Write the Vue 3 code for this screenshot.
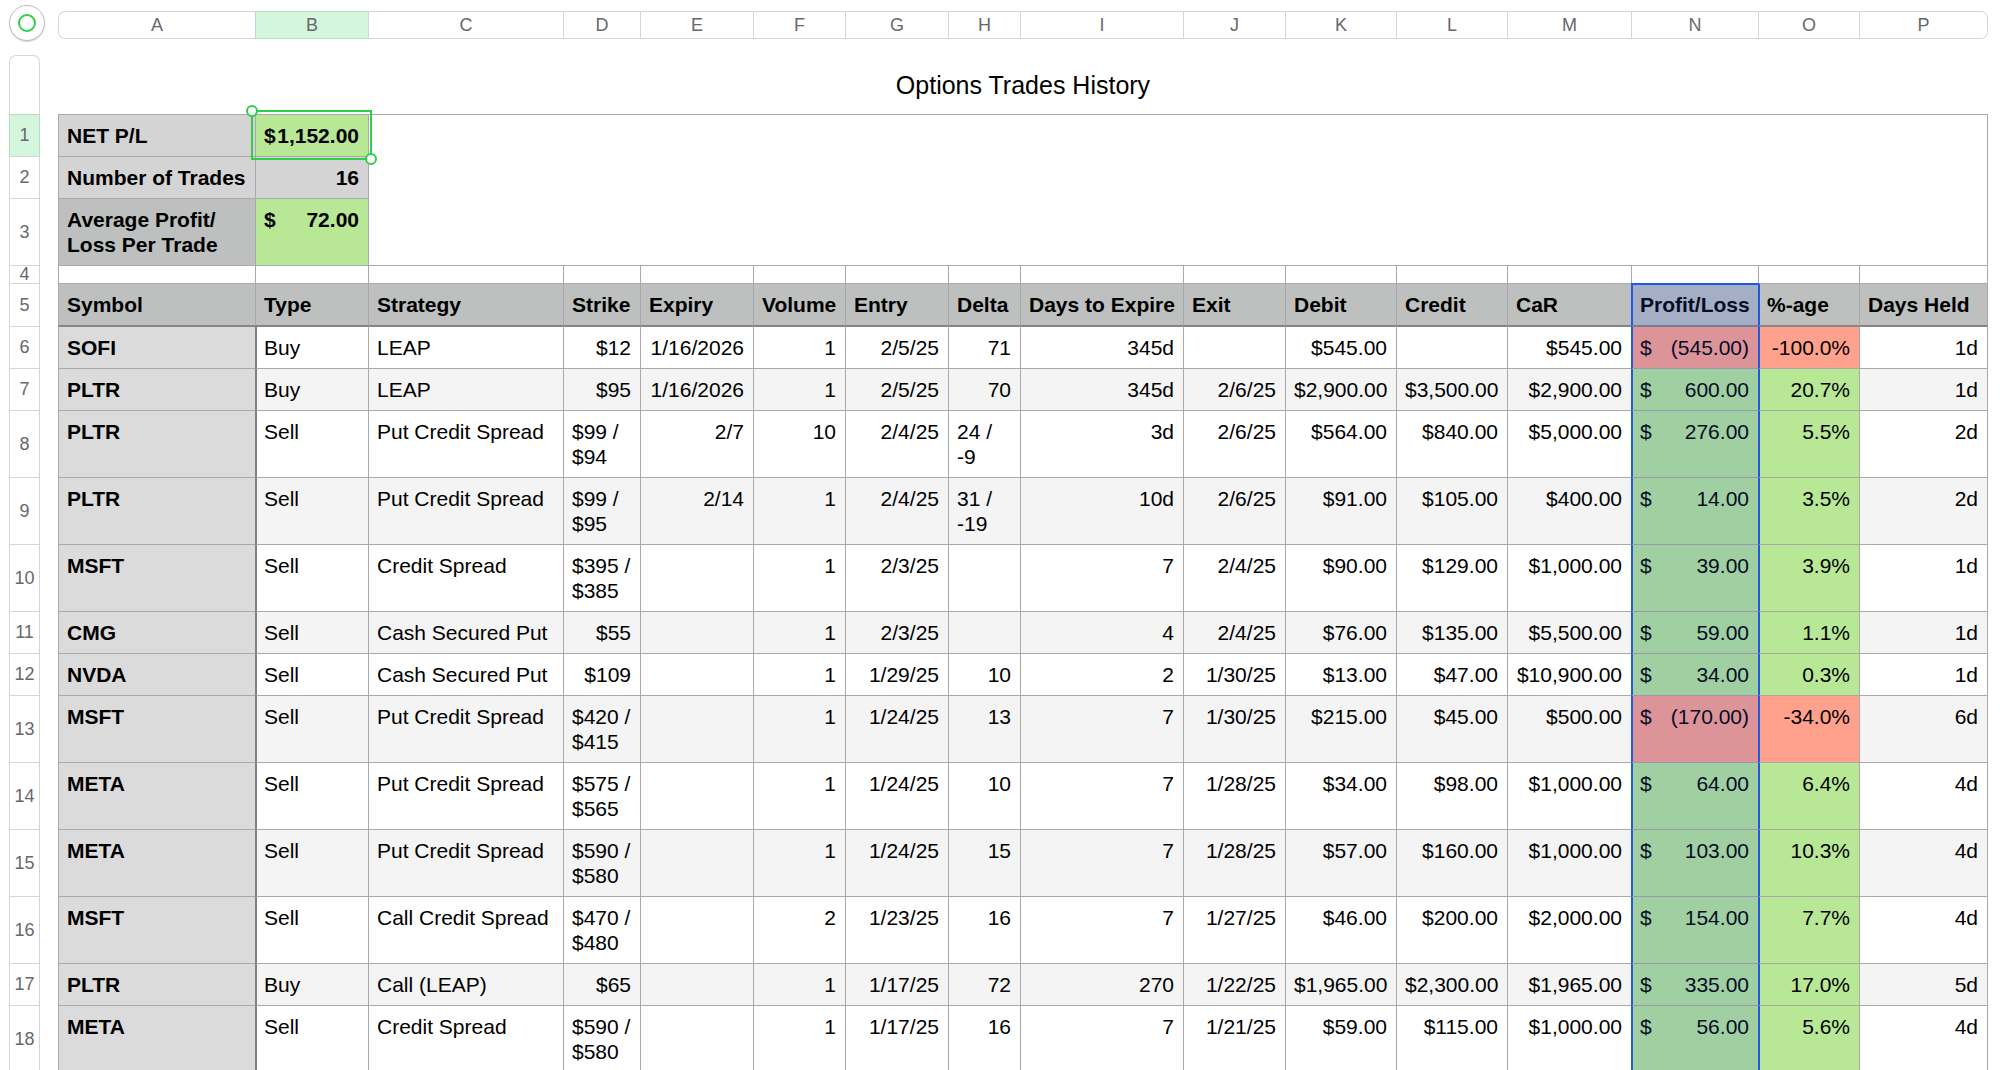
<script setup>
const columns = [
  { letter: 'A', width: 197 },
  { letter: 'B', width: 113 },
  { letter: 'C', width: 195 },
  { letter: 'D', width: 77 },
  { letter: 'E', width: 113 },
  { letter: 'F', width: 92 },
  { letter: 'G', width: 103 },
  { letter: 'H', width: 72 },
  { letter: 'I', width: 163 },
  { letter: 'J', width: 102 },
  { letter: 'K', width: 111 },
  { letter: 'L', width: 111 },
  { letter: 'M', width: 124 },
  { letter: 'N', width: 127 },
  { letter: 'O', width: 101 },
  { letter: 'P', width: 129 }
]

const headings = [
  'Symbol', 'Type', 'Strategy', 'Strike', 'Expiry', 'Volume', 'Entry', 'Delta',
  'Days to Expire', 'Exit', 'Debit', 'Credit', 'CaR', 'Profit/Loss', '%-age', 'Days Held'
]

const trades = [
  ['SOFI', 'Buy', 'LEAP', '$12', '1/16/2026', '1', '2/5/25', '71', '345d', '', '$545.00', '', '$545.00', '(545.00)', '-100.0%', '1d'],
  ['PLTR', 'Buy', 'LEAP', '$95', '1/16/2026', '1', '2/5/25', '70', '345d', '2/6/25', '$2,900.00', '$3,500.00', '$2,900.00', '600.00', '20.7%', '1d'],
  ['PLTR', 'Sell', 'Put Credit Spread', '$99 /\n$94', '2/7', '10', '2/4/25', '24 /\n-9', '3d', '2/6/25', '$564.00', '$840.00', '$5,000.00', '276.00', '5.5%', '2d'],
  ['PLTR', 'Sell', 'Put Credit Spread', '$99 /\n$95', '2/14', '1', '2/4/25', '31 /\n-19', '10d', '2/6/25', '$91.00', '$105.00', '$400.00', '14.00', '3.5%', '2d'],
  ['MSFT', 'Sell', 'Credit Spread', '$395 /\n$385', '', '1', '2/3/25', '', '7', '2/4/25', '$90.00', '$129.00', '$1,000.00', '39.00', '3.9%', '1d'],
  ['CMG', 'Sell', 'Cash Secured Put', '$55', '', '1', '2/3/25', '', '4', '2/4/25', '$76.00', '$135.00', '$5,500.00', '59.00', '1.1%', '1d'],
  ['NVDA', 'Sell', 'Cash Secured Put', '$109', '', '1', '1/29/25', '10', '2', '1/30/25', '$13.00', '$47.00', '$10,900.00', '34.00', '0.3%', '1d'],
  ['MSFT', 'Sell', 'Put Credit Spread', '$420 /\n$415', '', '1', '1/24/25', '13', '7', '1/30/25', '$215.00', '$45.00', '$500.00', '(170.00)', '-34.0%', '6d'],
  ['META', 'Sell', 'Put Credit Spread', '$575 /\n$565', '', '1', '1/24/25', '10', '7', '1/28/25', '$34.00', '$98.00', '$1,000.00', '64.00', '6.4%', '4d'],
  ['META', 'Sell', 'Put Credit Spread', '$590 /\n$580', '', '1', '1/24/25', '15', '7', '1/28/25', '$57.00', '$160.00', '$1,000.00', '103.00', '10.3%', '4d'],
  ['MSFT', 'Sell', 'Call Credit Spread', '$470 /\n$480', '', '2', '1/23/25', '16', '7', '1/27/25', '$46.00', '$200.00', '$2,000.00', '154.00', '7.7%', '4d'],
  ['PLTR', 'Buy', 'Call (LEAP)', '$65', '', '1', '1/17/25', '72', '270', '1/22/25', '$1,965.00', '$2,300.00', '$1,965.00', '335.00', '17.0%', '5d'],
  ['META', 'Sell', 'Credit Spread', '$590 /\n$580', '', '1', '1/17/25', '16', '7', '1/21/25', '$59.00', '$115.00', '$1,000.00', '56.00', '5.6%', '4d']
]

const PROFIT = 13
const PERCENT = 14

function cellClass(trade, index) {
  const loss = trade[PERCENT].startsWith('-')
  return {
    number: index > 2 && !trade[index].includes('\n'),
    first: index === 1,
    profit: index === PROFIT,
    percent: index === PERCENT,
    gain: index >= PROFIT && index <= PERCENT && !loss,
    loss: index >= PROFIT && index <= PERCENT && loss
  }
}
</script>

<template>
  <main class="sheet">
    <table class="grid">
      <colgroup>
        <col class="rail-col" />
        <col class="gap-col" />
        <col v-for="c in columns" :key="c.letter" :style="{ width: c.width + 'px' }" />
      </colgroup>
      <thead>
        <tr class="letters">
          <td class="corner">
            <button class="handle" type="button" aria-label="Select table">
              <svg viewBox="0 0 36 36" width="36" height="36" aria-hidden="true">
                <circle cx="18" cy="18" r="8" fill="none" stroke="#2fd049" stroke-width="2" />
              </svg>
            </button>
          </td>
          <td></td>
          <th v-for="c in columns" :key="c.letter" scope="col" :class="{ active: c.letter === 'B' }">{{ c.letter }}</th>
        </tr>
        <tr class="spacer"><td colspan="18"></td></tr>
        <tr class="title-row">
          <td class="rail rail-top"></td>
          <td></td>
          <td colspan="16"><h1 class="title">Options Trades History</h1></td>
        </tr>
      </thead>
      <tbody>
        <tr>
          <th class="rail active" scope="row">1</th>
          <td></td>
          <th class="cell summary" scope="row">NET P/L</th>
          <td class="cell gain strong selected">
            <div class="money"><span>$</span><span>1,152.00</span></div>
            <div class="selection"><i class="knob start"></i><i class="knob end"></i></div>
          </td>
          <td class="cell blank last" colspan="14" rowspan="3"></td>
        </tr>
        <tr>
          <th class="rail" scope="row">2</th>
          <td></td>
          <th class="cell summary" scope="row">Number of Trades</th>
          <td class="cell summary strong number">16</td>
        </tr>
        <tr>
          <th class="rail" scope="row">3</th>
          <td></td>
          <th class="cell heading" scope="row">Average Profit/<br />Loss Per Trade</th>
          <td class="cell gain strong">
            <div class="money"><span>$</span><span>72.00</span></div>
          </td>
        </tr>
        <tr class="thin">
          <th class="rail" scope="row">4</th>
          <td></td>
          <td v-for="c in columns" :key="c.letter" class="cell" :class="{ last: c.letter === 'P' }"></td>
        </tr>
        <tr class="headings">
          <th class="rail" scope="row">5</th>
          <td></td>
          <th
            v-for="(h, i) in headings"
            :key="h"
            class="cell heading"
            scope="col"
            :class="{ profit: i === PROFIT, percent: i === PERCENT, last: i === 15 }"
          >{{ h }}</th>
        </tr>
        <tr v-for="(t, r) in trades" :key="r" class="trade">
          <th class="rail" scope="row">{{ r + 6 }}</th>
          <td></td>
          <th class="cell symbol" scope="row">{{ t[0] }}</th>
          <template v-for="(value, i) in t" :key="i">
            <td v-if="i > 0" class="cell" :class="[cellClass(t, i), { banded: r % 2 === 1, last: i === 15 }]">
              <div v-if="i === PROFIT" class="money"><span>$</span><span>{{ value }}</span></div>
              <template v-else>{{ value }}</template>
            </td>
          </template>
        </tr>
      </tbody>
    </table>
  </main>
</template>

<style>
body {
  margin: 0;
  background: #fff;
}
</style>

<style scoped>
.sheet {
  box-sizing: border-box;
  height: 100vh;
  padding: 11px 12px 0 9px;
  overflow: hidden auto;
  scrollbar-width: none;
  background: #fff;
  color: #000;
  font-family: "Liberation Sans", Arial, sans-serif;
  font-size: 21px;
  line-height: 25px;
}

.grid {
  width: 100%;
  table-layout: fixed;
  border-collapse: separate;
  border-spacing: 0;
}

.rail-col { width: 31px; }
.gap-col { width: 18px; }

td, th {
  box-sizing: border-box;
  padding: 0;
}

/* Column letters */
.letters th {
  height: 28px;
  border: solid #d6d6d6;
  border-width: 1px 0 1px 1px;
  color: #68686c;
  font-size: 18px;
  font-weight: 400;
  line-height: 26px;
}
.letters th:nth-child(3) { border-radius: 7px 0 0 7px; }
.letters th:last-child {
  border-right-width: 1px;
  border-radius: 0 7px 7px 0;
}
.letters th.active {
  background: #d4f6dc;
  border-color: #b5dfbe;
}

.corner { position: relative; }
.handle {
  position: absolute;
  top: -6px;
  left: 0;
  box-sizing: border-box;
  width: 36px;
  height: 36px;
  padding: 0;
  border: 1px solid #bcbcbc;
  border-radius: 50%;
  background: #fff;
  box-shadow: 0 1px 1px rgba(0, 0, 0, 0.15);
}
.handle svg {
  display: block;
  margin: -1px;
}

.spacer td { height: 16px; }

.title-row td { height: 59px; }
.title {
  margin: 0;
  font-size: 25px;
  font-weight: 400;
  line-height: 30px;
  text-align: center;
}

/* Row numbers */
.rail {
  border: solid #d6d6d6;
  border-width: 1px 1px 0;
  color: #68686c;
  font-size: 18px;
  font-weight: 400;
  line-height: 17px;
  text-align: center;
  vertical-align: middle;
}
.rail-top { border-radius: 7px 7px 0 0; }
.rail.active {
  background: #d4f6dc;
  border-color: #b5dfbe;
}

/* Cells */
.cell {
  position: relative;
  padding: 8px 9px 8px 8px;
  border: solid #a9a9a9;
  border-width: 1px 0 0 1px;
  text-align: left;
  vertical-align: top;
  white-space: pre;
}
.last { border-right-width: 1px; }
.number { text-align: right; }
.strong { font-weight: 700; }
.thin .cell { padding: 0; }

.summary { background: #d4d4d4; }
.heading { background: #bdc0bf; }
.symbol { background: #dbdbdb; }
.banded { background: #f4f4f4; }
.gain { background: #b8e796; }
.loss { background: #ffa18c; }

.headings .cell {
  border-bottom: 1px solid #858585;
}
.headings + .trade .cell { border-top-color: #858585; }
.trade .first {
  padding-left: 7px;
  border-left: 2px solid #808080;
}

.money {
  display: flex;
  justify-content: space-between;
}

/* Highlighted range */
.cell.profit, .cell.percent {
  padding-left: 7px;
  border-left: 2px solid #2459df;
}
.headings .profit {
  padding-top: 7px;
  border-top: 2px solid #2459df;
}
.profit::after {
  position: absolute;
  inset: -1px 0;
  background: rgba(39, 80, 222, 0.16);
  content: "";
  pointer-events: none;
}

/* Selected cell */
.selection {
  position: absolute;
  z-index: 1;
  inset: -5px -4px -4px -5px;
  border: 2px solid #2fd049;
}
.knob {
  position: absolute;
  box-sizing: border-box;
  width: 12px;
  height: 12px;
  border: 2px solid #2fd049;
  border-radius: 50%;
  background: #fff;
}
.start { top: -7px; left: -7px; }
.end { right: -7px; bottom: -7px; }
</style>
